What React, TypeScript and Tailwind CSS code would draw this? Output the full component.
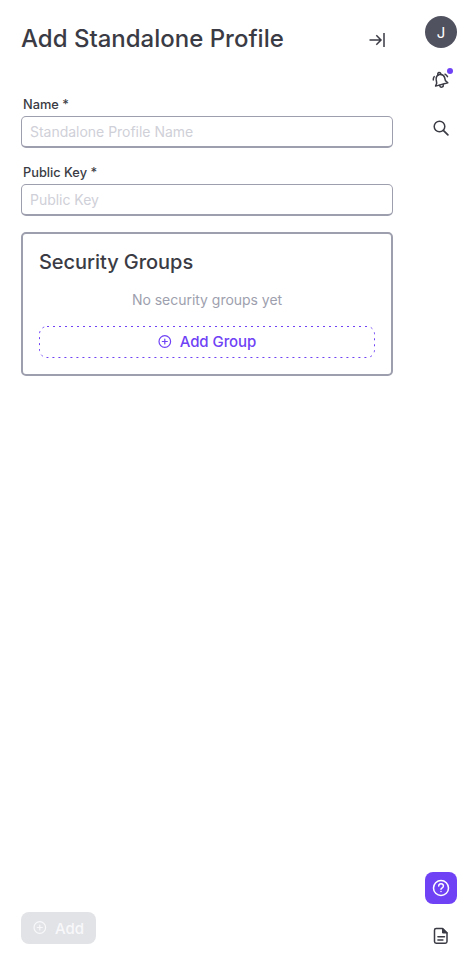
import type { ReactNode } from "react";

function Field({ label, placeholder }: { label: string; placeholder: string }) {
  return (
    <label className="flex flex-col">
      <span className="h-5 pl-0.5 text-[12.800px] leading-[17px] font-medium">{label}</span>
      <input
        type="text"
        placeholder={placeholder}
        className="h-8 w-full rounded-[5px] border border-b-2 border-[#9e9fae] px-2 text-[14px] leading-5 tracking-[-0.02px] outline-none placeholder:text-[#cfd0d8]"
      />
    </label>
  );
}

function Icon({ children }: { children: ReactNode }) {
  return (
    <svg width="20" height="20" viewBox="0 0 20 20" fill="none" stroke="currentColor" strokeWidth="1.5" strokeLinecap="round" strokeLinejoin="round">
      {children}
    </svg>
  );
}

function PlusCircle() {
  return (
    <svg className="shrink-0" width="14" height="14" viewBox="0 0 14 14" fill="none" stroke="currentColor" strokeWidth="1.2" strokeLinecap="round">
      <circle cx="6.800" cy="6.500" r="5.800" />
      <path d="M4.300 6.500h5M6.800 4v5" />
    </svg>
  );
}

export default function App() {
  return (
    <div className="flex h-[966px] w-[461px] bg-white font-['Inter',sans-serif] text-[#3a3b44]">
      <main className="flex w-[414px] flex-col pt-[22px] pr-[21px] pb-[22px] pl-[21px]">
        <header className="flex h-8 items-center justify-between">
          <h1 className="mt-0.5 text-[24px] leading-8 font-medium">Add Standalone Profile</h1>
          <button className="mt-1 mr-[6px]" aria-label="Close">
            <Icon>
              <path d="M2.500 10H14M9.300 5.300L14 10l-4.700 4.700M17 3v14" strokeLinecap="butt" strokeLinejoin="miter" />
            </Icon>
          </button>
        </header>
        <div className="mt-[42px] flex flex-col gap-4">
          <Field label="Name *" placeholder="Standalone Profile Name" />
          <Field label="Public Key *" placeholder="Public Key" />
          <section className="flex h-36 flex-col rounded-[5px] border-2 border-[#9e9fae] p-4">
            <h2 className="h-6 text-[20px] leading-6 font-medium tracking-[-0.05px]">Security Groups</h2>
            <p className="mt-4 text-center text-[14px] leading-5 tracking-[-0.03px] text-[#9e9fae]">No security groups yet</p>
            <button className="relative mt-4 flex h-8 shrink-0 items-center justify-center gap-2 text-[15px] font-medium text-[#6f42f5]">
              <svg className="absolute inset-0" width="336" height="32" fill="none">
                <rect x="0.500" y="0.500" width="335" height="31" rx="7.500" stroke="currentColor" strokeDasharray="2 4" />
              </svg>
              <PlusCircle />
              <span className="tracking-[-0.06px]">Add Group</span>
            </button>
          </section>
        </div>
        <button className="mt-auto flex h-8 w-[75px] items-center gap-2 rounded-lg bg-[#e2e3e7] pl-3 text-[15px] font-medium text-[#f8f8fa]">
          <PlusCircle />
          <span className="mt-0.5">Add</span>
        </button>
      </main>
      <aside className="flex w-[47px] flex-col items-center pt-4 pr-1 pb-[14px] pl-[11px]">
        <div className="flex size-8 items-center justify-center rounded-full bg-[#515260] pt-0.5 text-[15px] text-white">J</div>
        <button className="relative mt-4 flex size-8 items-center justify-center" aria-label="Notifications">
          <Icon>
            <path d="M4.600 16.100 5.700 13.200 5.200 9.700C4.900 7 6.300 5.100 8.600 4.600 11 4.100 12.900 5.200 13.600 7.500L14.400 10.600 16.800 12.800Z" />
            <path d="M7 5.200C6.400 3.800 6.900 2.800 7.900 2.500 8.900 2.300 9.800 3 10 4.500M8.600 15.500C9.100 17 10 17.400 11 17.100 12 16.800 12.500 15.800 12.300 14.500" />
            <path d="M3.200 6.600C2.400 7.600 2.200 8.700 2.300 9.900M14 4.200C15.200 4.800 15.900 5.500 16.500 6.600" />
          </Icon>
          <span className="absolute top-1 right-1 size-1.5 rounded-full bg-[#6f42f5]" />
        </button>
        <button className="mt-4 flex size-8 items-center justify-center" aria-label="Search">
          <Icon>
            <circle cx="8.500" cy="8.500" r="5.300" />
            <path d="m12.300 12.300 4.600 4.600" strokeWidth="1.700" />
          </Icon>
        </button>
        <button className="mt-auto flex size-8 items-center justify-center rounded-lg bg-[#6f42f5] text-white" aria-label="Help">
          <Icon>
            <circle cx="10" cy="10" r="7.500" />
            <path d="M7.700 7.900a2.350 2.200 0 1 1 3.600 1.900c-.8.5-1.300.8-1.300 1.400M10 13.500v.1" />
          </Icon>
        </button>
        <button className="mt-4 flex size-8 items-center justify-center" aria-label="Documentation">
          <Icon>
            <path d="M11.500 2.500H5.200a1.700 1.700 0 0 0-1.700 1.700v11.400a1.700 1.700 0 0 0 1.700 1.700h9.100a1.700 1.700 0 0 0 1.700-1.700V7zM6.900 10.800h6.600M6.900 13.900h5" />
            <path d="M11.500 2.500V7H16z" fill="currentColor" strokeWidth="1" />
          </Icon>
        </button>
      </aside>
    </div>
  );
}
